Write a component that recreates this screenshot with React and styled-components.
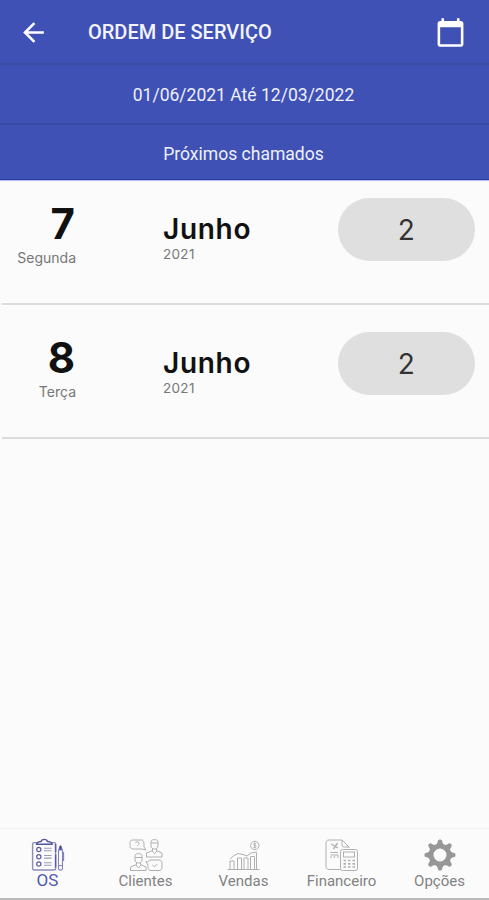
import styled, { createGlobalStyle } from "styled-components";

const GlobalStyle = createGlobalStyle`
  * {
    box-sizing: border-box;
  }

  body {
    margin: 0;
    background: #fbfbfb;
    font-family: Roboto, sans-serif;
  }
`;

const days = [
  { day: "7", week: "Segunda", month: "Junho", year: "2021", total: 2 },
  { day: "8", week: "Terça", month: "Junho", year: "2021", total: 2 },
];

const BackIcon = () => (
  <svg width="31" height="31" viewBox="0 0 24 24" fill="#fff">
    <path d="M20 11H7.83l5.59-5.59L12 4l-8 8 8 8 1.41-1.41L7.83 13H20v-2z" />
  </svg>
);

const CalendarIcon = () => (
  <svg width="31" height="31" viewBox="0 0 24 24" fill="#fff">
    <path d="M20 3h-1V1h-2v2H7V1H5v2H4c-1.1 0-2 .9-2 2v16c0 1.1.9 2 2 2h16c1.1 0 2-.9 2-2V5c0-1.1-.9-2-2-2zm0 18H4V8h16v13z" />
  </svg>
);

const OrdersIcon = () => (
  <TabIcon viewBox="0 0 34 34">
    <rect x="1.6" y="4.6" width="23" height="27.4" rx="1.5" stroke="#8c8cba" strokeWidth="1.4" />
    <path d="M5.5 6.3h15.6c0-2.2-2-2.4-4.6-2.8-.6-2.8-5.8-2.8-6.4 0-2.6.4-4.6.6-4.6 2.8z" fill="#fbfbfb" stroke="#5555a0" strokeWidth="1.4" />
    <path d="M24.6 6v8m0 2.5v13" stroke="#5959a5" strokeWidth="1.4" />
    <g stroke="#5c5c9c" strokeWidth="1.2">
      <circle cx="7.8" cy="11.5" r="2.1" />
      <circle cx="7.8" cy="18.8" r="2.1" />
      <circle cx="7.8" cy="26" r="2.1" />
    </g>
    <path d="M13 10.2h7.6M13 12.8h7.6M13 17.5h7.6M13 20.1h7.6M13 24.7h7.6M13 27.3h7.6" stroke="#9b9bc1" strokeWidth="1.1" />
    <path d="M27.5 12l2-4.2 2 4.2v18.5c0 2.2-4 2.2-4 0zM27.5 12h4M27.5 27.5h4M32.6 14v9" stroke="#8383b8" strokeWidth="1.1" />
    <path d="M29.5 8v4" stroke="#4545a0" strokeWidth="2" />
  </TabIcon>
);

const ClientsIcon = () => (
  <TabIcon viewBox="0 0 34 34">
    <path d="M4 2h8c3 0 3 2 3 7l2 3-4-1H4c-3 0-3-2-3-4.5S1 2 4 2z" />
    <path d="M6.5 5c.5-2 4.500-1.500 3.500 1-.4.9-1.600 1-1.600 2.100" />
    <path d="M22 3.500C22 1 29 1 29 3.500V8c0 4-7 4-7 0zM22 5h7M23.500 10.500v2L17.500 15v4h15.500v-4l-5.500-2.500v-2M23 13l2.500 2.500L28 13" />
    <path d="M6 17.500c0-2.500 7-2.500 7 0V22c0 4-7 4-7 0zM6 19.500h7M7.500 24.500v2L1.500 29v3.500h15.500V29L11.500 26.500v-2M7 27l2.500 3 2.500-3" />
    <path d="M22 22h8c3 0 3 2 3 5s0 5.500-3 5.500h-8c-3 0-3-2-3-5.500l-2-3.500c3 1 2-1.500 5-1.500z" />
    <path d="M23.500 27l2 1.500 3-2.500" />
  </TabIcon>
);

const SalesIcon = () => (
  <TabIcon viewBox="0 0 34 34">
    <path d="M.5 31.500h32M3 31v-8h4v8M10.500 31V20h4v11M17 31V20h4v11M23.500 31V18.500h4V31M29.500 31V15" />
    <path d="M3 21l4-3.500 4-2 5 1 4 1.500 4-3 6-1" />
    <circle cx="27.800" cy="7.500" r="4.200" />
    <path d="M29.300 5.700c-3-1-3.500 1.200-1.500 1.700s2 2.600-1.500 1.800M27.800 4.500v6" />
  </TabIcon>
);

const FinanceIcon = () => (
  <TabIcon viewBox="0 0 34 34">
    <path d="M15.500 31.500H4c-2 0-3-1-3-3V5c0-2 1-3 3-3h13l7 7v1M17 2v4.500c0 2 .5 2.500 2.500 2.500H24" />
    <path d="M6 6l7 4M12.500 5l-4 6" strokeWidth="1.4" />
    <path d="M5.500 14.500h7.500M5.500 17h7.500v3M6 20v-2M9.300 20v-2" />
    <rect x="15.5" y="11.5" width="17" height="21" rx="2" fill="#fbfbfb" />
    <rect x="18.5" y="14" width="11" height="5" />
    <path d="M18.500 22.500h2.500m2 0h2.500m2 0h2.500M18.500 25.800h2.500m2 0h2.500m2 0h2.500M18.500 29h2.500m2 0h2.500m2 0h2.500" strokeWidth="1.7" />
  </TabIcon>
);

const OptionsIcon = () => (
  <TabIcon viewBox="-17 -17 34 34">
    <circle r="8.9" stroke="#979797" strokeWidth="4.8" />
    {[0, 45, 90, 135, 180, 225, 270, 315].map((angle) => (
      <path
        key={angle}
        transform={`rotate(${angle})`}
        d="M-4.200-10C-2.500-11.600-2.300-13-2-14.400c.3-1.500 3.700-1.500 4 0C2.300-13 2.500-11.600 4.200-10z"
        fill="#979797"
        stroke="none"
      />
    ))}
  </TabIcon>
);

const tabs = [
  { label: "OS", icon: <OrdersIcon />, active: true },
  { label: "Clientes", icon: <ClientsIcon /> },
  { label: "Vendas", icon: <SalesIcon /> },
  { label: "Financeiro", icon: <FinanceIcon /> },
  { label: "Opções", icon: <OptionsIcon /> },
];

const App = () => {
  return (
    <Container>
      <GlobalStyle />
      <Header>
        <BackIcon />
        <h1>ORDEM DE SERVIÇO</h1>
        <CalendarIcon />
      </Header>
      <InfoBar $height={60}>01/06/2021 Até 12/03/2022</InfoBar>
      <InfoBar $height={56} $last>Próximos chamados</InfoBar>

      <List>
        {days.map((item) => (
          <DayRow key={item.day}>
            <DayColumn>
              <strong>{item.day}</strong>
              <span>{item.week}</span>
            </DayColumn>
            <MonthColumn>
              <strong>{item.month}</strong>
              <span>{item.year}</span>
            </MonthColumn>
            <Badge>{item.total}</Badge>
          </DayRow>
        ))}
      </List>

      <TabBar>
        {tabs.map((tab) => (
          <Tab key={tab.label} $active={tab.active}>
            {tab.icon}
            <span>{tab.label}</span>
          </Tab>
        ))}
      </TabBar>
    </Container>
  );
};

const Container = styled.div`
  display: flex;
  flex-direction: column;
  height: 900px;
  overflow: hidden;
`;

const Header = styled.header`
  display: flex;
  align-items: center;
  height: 65px;
  padding: 1px 23px 0 18px;
  background: #3f51b5;
  border-bottom: 2px solid #3a4ba6;

  h1 {
    flex: 1;
    margin: 0 0 0 39px;
    color: #f3f4fc;
    font-size: 20px;
    font-weight: 500;
    white-space: nowrap;
  }
`;

const InfoBar = styled.div`
  display: flex;
  align-items: center;
  justify-content: center;
  height: ${(props) => props.$height}px;
  padding: 2px 2px 0 0;
  background: #3f51b5;
  border-bottom: ${(props) => (props.$last ? "1px solid #b5bde9" : "2px solid #3a4ba6")};
  box-shadow: ${(props) => (props.$last ? "inset 0 -1px #293caa" : "none")};
  color: #eef0fb;
  font-size: 17.55px;
`;

const List = styled.main`
  flex: 1;
`;

const DayRow = styled.div`
  display: grid;
  grid-template-columns: 74px 1fr 137px;
  column-gap: 87px;
  height: 134px;
  margin-left: 2px;
  padding: 27px 14px 0 0;
  border-bottom: 2px solid #dcdcdc;

  /* the first row sits closer to the header */
  &:first-child {
    height: 124px;
    padding-top: 17px;
  }
`;

const DayColumn = styled.div`
  display: flex;
  flex-direction: column;
  align-items: flex-end;
  font-family: Inter, sans-serif;

  strong {
    padding: 1px 1px 0 0;
    color: #111;
    font-size: 42px;
    font-weight: 700;
    line-height: 50px;
  }

  span {
    color: #777;
    font-size: 14px;
    line-height: 18px;
  }
`;

const MonthColumn = styled.div`
  display: flex;
  flex-direction: column;
  font-family: Inter, sans-serif;

  strong {
    margin-top: 15px;
    color: #111;
    font-size: 28px;
    font-weight: 600;
    line-height: 33px;
    letter-spacing: 0.7px;
  }

  span {
    color: #777;
    font-size: 13.5px;
    line-height: 16px;
    letter-spacing: 0.3px;
  }
`;

const Badge = styled.div`
  display: flex;
  align-items: center;
  justify-content: center;
  height: 63px;
  padding-right: 1px;
  border-radius: 32px;
  background: #dfdfdf;
  color: #333;
  font-family: Inter, sans-serif;
  font-size: 28px;
`;

const TabBar = styled.nav`
  display: grid;
  grid-template-columns: repeat(5, 98px);
  height: 72px;
  margin-left: -1px;
  border-top: 1px solid #f0f0f0;
  border-bottom: 2px solid #bababa;
`;

const Tab = styled.div`
  display: flex;
  flex-direction: column;
  align-items: center;
  padding-top: 9px;
  color: ${(props) => (props.$active ? "#5059b2" : "#828282")};

  span {
    margin-top: ${(props) => (props.$active ? "-1px" : "0")};
    padding-right: 1px;
    font-size: ${(props) => (props.$active ? "17px" : "15px")};
    line-height: 18px;
  }
`;

const TabIcon = styled.svg`
  width: 34px;
  height: 34px;
  fill: none;
  stroke: #b0b0b0;
  stroke-width: 1;
`;

export default App;
